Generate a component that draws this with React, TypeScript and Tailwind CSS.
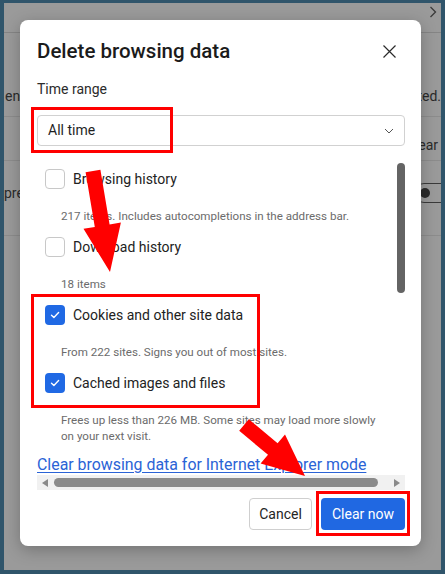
import React from 'react';

type Pt = [number, number];

// Builds a block arrow outline from its tail to its tip
const arrowPoints = (from: Pt, to: Pt, shaft: number, headLen: number, headW: number): string => {
  const dx = to[0] - from[0];
  const dy = to[1] - from[1];
  const len = Math.hypot(dx, dy);
  const ux = dx / len;
  const uy = dy / len;
  const px = -uy;
  const py = ux;
  const bx = to[0] - ux * headLen;
  const by = to[1] - uy * headLen;
  const s = shaft / 2;
  const h = headW / 2;
  const pts: Pt[] = [
    [from[0] + px * s, from[1] + py * s],
    [bx + px * s, by + py * s],
    [bx + px * h, by + py * h],
    to,
    [bx - px * h, by - py * h],
    [bx - px * s, by - py * s],
    [from[0] - px * s, from[1] - py * s],
  ];
  return pts.map(p => `${p[0].toFixed(1)},${p[1].toFixed(1)}`).join(' ');
};

const items = [
  { label: 'Browsing history', note: ['217 items. Includes autocompletions in the address bar.'], checked: false },
  { label: 'Download history', note: ['18 items'], checked: false },
  { label: 'Cookies and other site data', note: ['From 222 sites. Signs you out of most sites.'], checked: true },
  {
    label: 'Cached images and files',
    note: ['Frees up less than 226 MB. Some sites may load more slowly', 'on your next visit.'],
    checked: true,
  },
];

const CheckBox = ({ checked }: { checked: boolean }) =>
  checked ? (
    <span className="w-[20px] h-[20px] rounded-[4px] bg-[#2069e4] flex items-center justify-center">
      <svg width="10" height="8" viewBox="0 0 10 8" fill="none">
        <path d="M1.5 4.2 L3.9 6.4 L8.6 1.6" stroke="white" strokeWidth="1.4" strokeLinecap="round" strokeLinejoin="round" />
      </svg>
    </span>
  ) : (
    <span className="w-[20px] h-[20px] rounded-[4px] border border-[#c8c8c8] bg-white" />
  );

// Settings page sitting dimmed behind the dialog
const DimmedPage = () => (
  <div className="flex flex-col text-[14px] text-[#2a2a2a]">
    <div className="h-[29px] flex justify-end pr-[4px] pt-[3px]">
      <svg width="8" height="12" viewBox="0 0 8 12" fill="none">
        <path d="M1.5 1 L6.5 6 L1.5 11" stroke="#3a3a3a" strokeWidth="1.3" />
      </svg>
    </div>
    <div className="h-px bg-[#858585]" />
    <div className="h-[53px]" />
    <div className="h-[20px] flex items-center justify-between">
      <span className="ml-[1px]">en</span>
      <span>ted.</span>
    </div>
    <div className="h-[10px]" />
    <div className="h-px bg-[#8c8c8c]" />
    <div className="h-[18px]" />
    <div className="h-[20px] flex items-center justify-end">
      <span className="mr-[3px]">Clear</span>
    </div>
    <div className="h-[5px]" />
    <div className="h-px bg-[#8c8c8c]" />
    <div className="h-[22px]" />
    <div className="h-[20px] flex items-center justify-between">
      <span>pre</span>
      <span className="w-[40px] h-[20px] rounded-full border border-[#3a3a3a] flex items-center pl-[5px] -mr-[13px]">
        <span className="w-[10px] h-[10px] rounded-full bg-[#2a2a2a]" />
      </span>
    </div>
    <div className="h-[32px]" />
    <div className="h-px bg-[#8c8c8c]" />
  </div>
);

export default function App() {
  return (
    <div className="relative w-[445px] h-[574px] overflow-hidden bg-[#9a9a9a] border-x-4 border-t-[3px] border-b-4 border-[#30556b] font-['Roboto',sans-serif]">
      <DimmedPage />

      <div className="absolute left-[16px] top-[17px] w-[401px] h-[526px] bg-white rounded-[8px] shadow-[0_4px_16px_rgba(0,0,0,0.25)] pt-[17px] pl-[17px] pr-[16px] pb-[16px] flex flex-col">
        <div className="h-[28px] flex items-center justify-between">
          <h1 className="text-[20.5px] leading-[28px] font-medium text-[#1b1b1b]">Delete browsing data</h1>
          <span className="w-[20px] h-[20px] mr-[6px] flex items-center justify-center">
            <svg width="13" height="13" viewBox="0 0 13 13" fill="none">
              <path d="M0.5 0.5 L12.5 12.5 M12.5 0.5 L0.5 12.5" stroke="#2b2b2b" strokeWidth="1.2" />
            </svg>
          </span>
        </div>

        <div className="mt-[14px] h-[20px] text-[14px] leading-[20px] text-[#2b2b2b]">Time range</div>

        <div className="mt-[16px] h-[31px] rounded-[4px] border border-[#d1d1d1] flex items-center justify-between pl-[10px] pr-[10px]">
          <span className="text-[14px] text-[#1f1f1f]">All time</span>
          <svg width="10" height="6" viewBox="0 0 10 6" fill="none">
            <path d="M1 1 L5 5 L9 1" stroke="#555" strokeWidth="1" />
          </svg>
        </div>

        <div className="mt-[8px] h-[321px] flex">
          <div className="flex-1 pt-[7px] flex flex-col min-w-0">
            {items.map(item => (
              <div key={item.label} className="flex flex-col">
                <div className="h-[36px] flex items-center gap-[8px] pl-[8px]">
                  <CheckBox checked={item.checked} />
                  <span className="text-[14px] text-[#222]">{item.label}</span>
                </div>
                <div className="pl-[24px] pt-[11px] pb-[5px] text-[11.6px] leading-[16px] text-[#6b6b6b] whitespace-nowrap">
                  {item.note.map(line => (
                    <div key={line}>{line}</div>
                  ))}
                </div>
              </div>
            ))}
            <a className="mt-[6px] h-[20px] leading-[20px] text-[15.9px] text-[#2a63d6] underline underline-offset-2 whitespace-nowrap">
              Clear browsing data for Internet Explorer mode
            </a>
          </div>
          <div className="w-[8px] pt-[9px]">
            <div className="h-[130px] rounded-full bg-[#646464]" />
          </div>
        </div>

        {/* horizontal scrollbar */}
        <div className="h-[15px] bg-[#f1f1f1] flex items-center px-[5px] gap-[5px]">
          <svg width="7" height="8" viewBox="0 0 7 8">
            <path d="M6 0 L0 4 L6 8 Z" fill="#8a8a8a" />
          </svg>
          <div className="flex-1 h-[9px] rounded-full bg-[#8b8b8b] mr-[10px]" />
          <svg width="7" height="8" viewBox="0 0 7 8">
            <path d="M1 0 L7 4 L1 8 Z" fill="#8a8a8a" />
          </svg>
        </div>

        <div className="mt-[8px] h-[32px] flex justify-end gap-[9px]">
          <button className="w-[63px] h-[32px] rounded-[4px] border border-[#cfcfcf] bg-white text-[14px] text-[#242424]">
            Cancel
          </button>
          <button className="w-[84px] h-[32px] rounded-[4px] bg-[#2068e2] text-[14px] text-white">Clear now</button>
        </div>
      </div>

      {/* red callouts drawn over the dialog */}
      <svg className="absolute left-[-4px] top-[-3px] pointer-events-none" width="445" height="574" viewBox="0 0 445 574">
        <g fill="none" stroke="#ff0000" strokeWidth="3">
          <rect x="32.5" y="108.5" width="139" height="43" />
          <rect x="32.5" y="295.5" width="226" height="111" />
          <rect x="317.5" y="492.5" width="91" height="42" />
        </g>
        <g fill="#ff0000">
          <polygon points={arrowPoints([93, 171], [110, 272], 15, 47, 38)} />
          <polygon points={arrowPoints([244, 425], [305, 476], 15, 42, 38)} />
        </g>
      </svg>
    </div>
  );
}
